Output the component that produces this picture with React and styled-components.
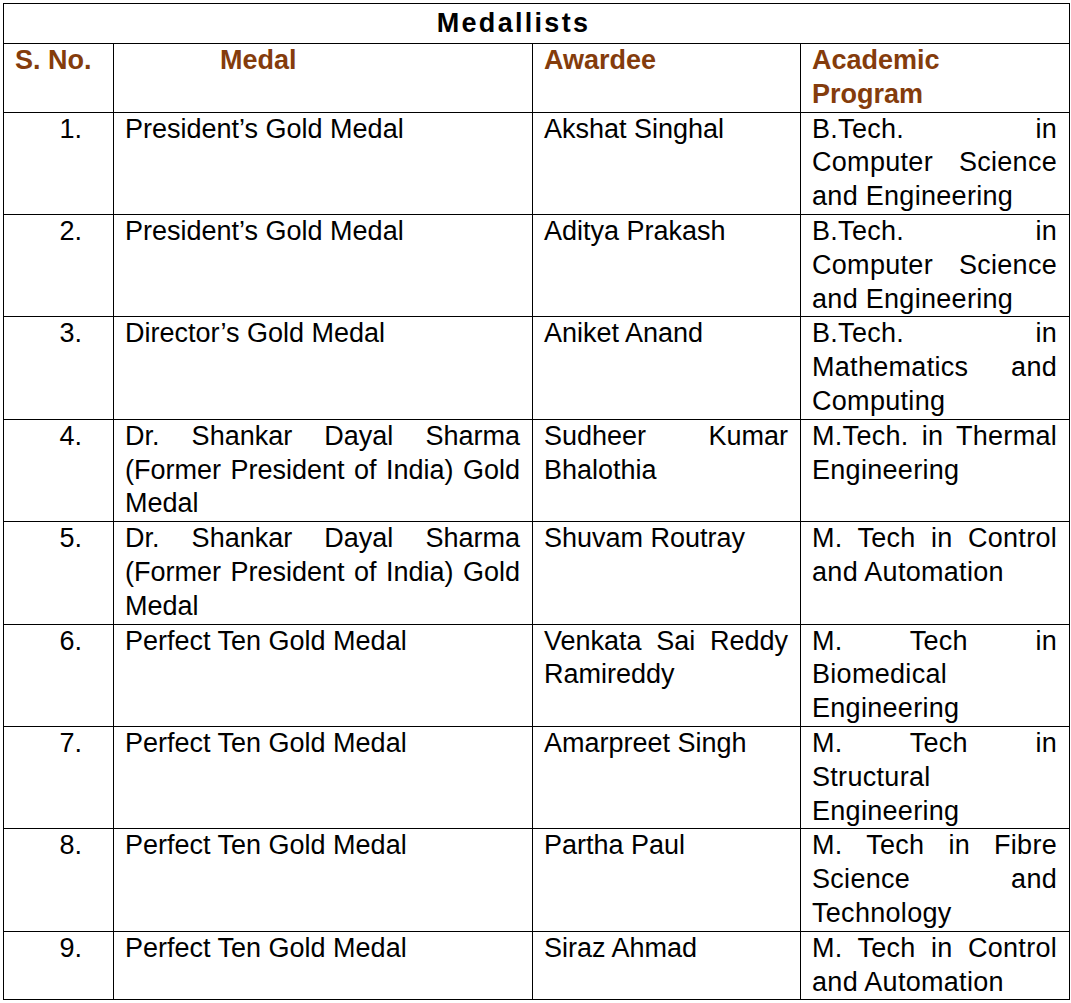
import React from "react";
import styled, { createGlobalStyle } from "styled-components";

const GlobalStyle = createGlobalStyle`
  html, body {
    margin: 0;
    padding: 0;
    background: #fff;
  }
  body {
    font-family: "Liberation Sans", Arial, sans-serif;
    color: #000;
  }
`;

const Page = styled.div`
  padding: 3px 2px 0 3px;
`;

const Table = styled.table`
  width: 1066px;
  border-collapse: collapse;
  table-layout: fixed;
  font-size: 27px;
  line-height: 33.8px;
`;

const Cell = styled.td`
  border: 1px solid #000;
  padding: 0 12px 0 11px;
  vertical-align: top;
  text-align: justify;
  letter-spacing: ${(p) => (p.$loose ? "0.3px" : "normal")};
`;

const TitleCell = styled.td`
  border: 1px solid #000;
  padding: 0 46px 0 0;
  text-align: center;
  font-weight: bold;
  letter-spacing: 2.3px;
  line-height: 39px;
`;

const HeadCell = styled.th`
  border: 1px solid #000;
  padding: 0 12px 0 ${(p) => p.$indent || 11}px;
  vertical-align: top;
  text-align: left;
  font-weight: bold;
  color: #843c0c;
`;

const NumCell = styled(Cell)`
  text-align: right;
  padding: 0 31px 0 0;
`;

const rows = [
  ["President’s Gold Medal", "Akshat Singhal", "B.Tech. in Computer Science and Engineering"],
  ["President’s Gold Medal", "Aditya Prakash", "B.Tech. in Computer Science and Engineering"],
  ["Director’s Gold Medal", "Aniket Anand", "B.Tech. in Mathematics and Computing"],
  [
    "Dr. Shankar Dayal Sharma (Former President of India) Gold Medal",
    "Sudheer Kumar Bhalothia",
    "M.Tech. in Thermal Engineering",
  ],
  [
    "Dr. Shankar Dayal Sharma (Former President of India) Gold Medal",
    "Shuvam Routray",
    "M. Tech in Control and Automation",
  ],
  ["Perfect Ten Gold Medal", "Venkata Sai Reddy Ramireddy", "M. Tech in Biomedical Engineering"],
  ["Perfect Ten Gold Medal", "Amarpreet Singh", "M. Tech in Structural Engineering"],
  ["Perfect Ten Gold Medal", "Partha Paul", "M. Tech in Fibre Science and Technology"],
  ["Perfect Ten Gold Medal", "Siraz Ahmad", "M. Tech in Control and Automation"],
];

export default function App() {
  return (
    <Page>
      <GlobalStyle />
      <Table>
        <colgroup>
          <col style={{ width: 110 }} />
          <col style={{ width: 419 }} />
          <col style={{ width: 268 }} />
          <col style={{ width: 269 }} />
        </colgroup>
        <thead>
          <tr>
            <TitleCell colSpan={4}>Medallists</TitleCell>
          </tr>
          <tr>
            <HeadCell>S. No.</HeadCell>
            <HeadCell $indent={106}>Medal</HeadCell>
            <HeadCell>Awardee</HeadCell>
            <HeadCell>Academic Program</HeadCell>
          </tr>
        </thead>
        <tbody>
          {rows.map(([medal, name, program], i) => (
            <tr key={i}>
              <NumCell>{i + 1}.</NumCell>
              <Cell>{medal}</Cell>
              <Cell>{name}</Cell>
              <Cell $loose>{program}</Cell>
            </tr>
          ))}
        </tbody>
      </Table>
    </Page>
  );
}
